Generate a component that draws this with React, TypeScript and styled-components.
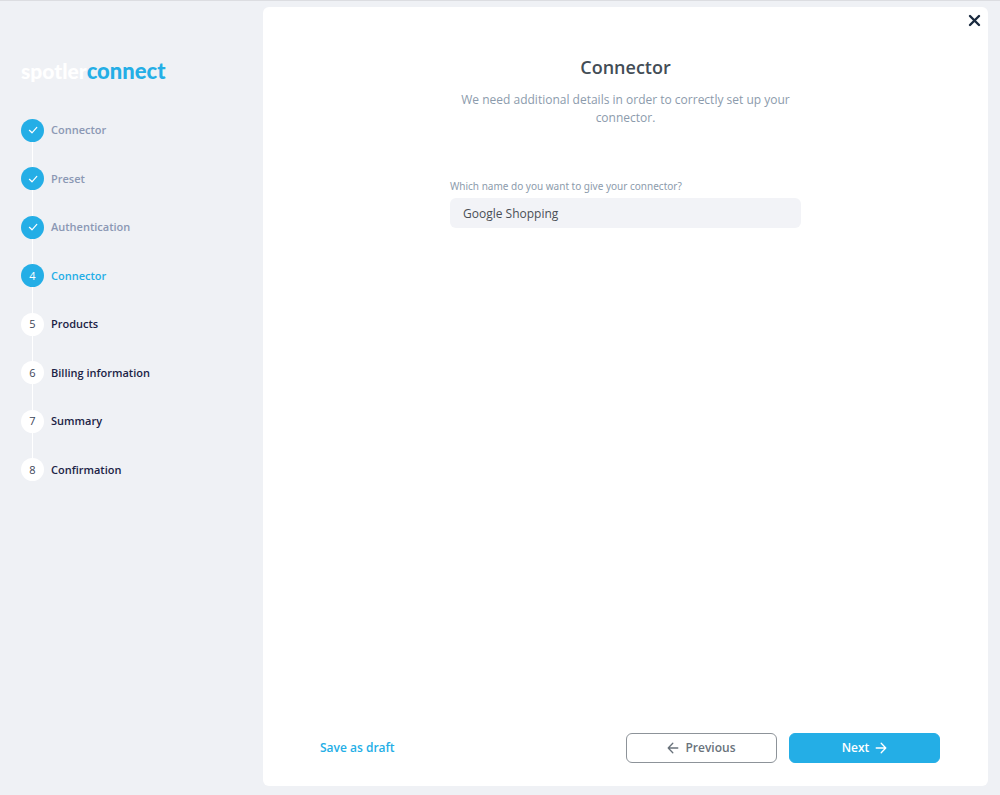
import React, { useState } from "react";
import styled, { createGlobalStyle, css } from "styled-components";

const GlobalStyle = createGlobalStyle`
  *, *::before, *::after { box-sizing: border-box; }
  body {
    margin: 0;
    background: #eff1f5;
    font-family: "Open Sans", "Noto Sans", sans-serif;
    font-size: 12px;
    line-height: 18px;
    color: #434d56;
  }
  button, input { font: inherit; }
`;

const Page = styled.div`
  display: grid;
  grid-template-columns: 263px minmax(0, 1fr);
  min-height: 100vh;
  border-top: 1px solid #dcdde1;
`;

const Sidebar = styled.aside`
  padding: 57px 20px 24px 21px;
`;

const Logo = styled.div`
  height: 26px;
  font-family: Lato, sans-serif;
  font-size: 21px;
  font-weight: 900;
  line-height: 26px;
  color: #fff;
`;

const LogoAccent = styled.span`
  font-size: 22px;
  color: #24aee6;
`;

const StepList = styled.ol`
  display: grid;
  grid-auto-rows: 1fr;
  min-height: 388px;
  margin: 22px 0 0;
  padding: 0;
  list-style: none;
`;

type StepState = "done" | "current" | "todo";

const labelColor = { done: "#8b98b4", current: "#24aee6", todo: "#1b2345" };

const StepItem = styled.li<{ $state: StepState }>`
  position: relative;
  display: flex;
  align-items: center;
  gap: 7px;
  font-size: 11px;
  font-weight: 600;
  color: ${(p) => labelColor[p.$state]};

  &:not(:last-child)::before {
    content: "";
    position: absolute;
    top: 50%;
    left: 11px;
    width: 1px;
    height: 100%;
    background: #fff;
  }
`;

const Marker = styled.span<{ $state: StepState }>`
  position: relative;
  z-index: 1;
  display: flex;
  align-items: center;
  justify-content: center;
  width: 23px;
  height: 23px;
  border-radius: 50%;
  font-weight: 400;
  background: ${(p) => (p.$state === "todo" ? "#fff" : "#24aee6")};
  color: ${(p) => (p.$state === "todo" ? "#3c4558" : "#fff")};
`;

const Panel = styled.main`
  position: relative;
  display: flex;
  flex-direction: column;
  margin: 6px 12px 9px 0;
  padding: 48px 48px 23px;
  border-radius: 6px;
  background: #fff;
`;

const CloseButton = styled.button`
  position: absolute;
  top: 6px;
  right: 6px;
  display: flex;
  padding: 0;
  border: 0;
  background: none;
  color: #1a2a3f;
  cursor: pointer;
`;

const Content = styled.form`
  flex: 1;
  width: 100%;
  max-width: 351px;
  margin: 0 auto;
  display: flex;
  flex-direction: column;
`;

const Title = styled.h1`
  margin: 0;
  font-size: 18px;
  font-weight: 600;
  line-height: 24px;
  text-align: center;
`;

const Intro = styled.p`
  margin: 12px 0 50px;
  text-align: center;
  color: #8c9bac;
`;

const FieldLabel = styled.label`
  margin-bottom: 3px;
  font-family: "Noto Sans", sans-serif;
  font-size: 10px;
  color: #8c9bac;
`;

const TextInput = styled.input`
  width: 100%;
  height: 30px;
  padding: 0 13px;
  border: 0;
  border-radius: 6px;
  background: #f2f3f7;
  color: #4a4f56;
`;

const Footer = styled.footer`
  display: flex;
  align-items: center;
  gap: 12px;
  padding-left: 9px;
`;

const DraftLink = styled.a`
  margin-right: auto;
  font-weight: 600;
  color: #24aee6;
  text-decoration: none;
`;

const NavButton = styled.button<{ $primary?: boolean }>`
  display: flex;
  align-items: center;
  justify-content: center;
  gap: 6px;
  width: 151px;
  height: 30px;
  padding: 0;
  border: 1px solid #8d9399;
  border-radius: 6px;
  background: #fff;
  color: #69727b;
  font-weight: 600;
  cursor: pointer;
  ${(p) =>
    p.$primary &&
    css`
      border-color: #24aee6;
      background: #24aee6;
      color: #fff;
    `}
`;

const CheckIcon = () => (
  <svg width="10" height="10" viewBox="0 0 10 10" fill="none" stroke="currentColor" strokeWidth="1.2" strokeLinecap="round" strokeLinejoin="round" aria-hidden="true">
    <path d="M1.4 5.3 4 7.8 8.8 2.4" />
  </svg>
);

const CloseIcon = () => (
  <svg width="15" height="15" viewBox="0 0 15 15" fill="none" stroke="currentColor" strokeWidth="2.4" strokeLinecap="round" aria-hidden="true">
    <path d="M3 3 12 12M12 3 3 12" />
  </svg>
);

const ArrowIcon = ({ back = false }: { back?: boolean }) => (
  <svg width="12" height="12" viewBox="0 0 12 12" fill="none" stroke="currentColor" strokeWidth="1.3" strokeLinecap="round" strokeLinejoin="round" aria-hidden="true">
    <path d={back ? "M10.8 6H1.2M5.8 1.2 1.2 6l4.6 4.8" : "M1.2 6h9.6M6.2 1.2 10.8 6l-4.6 4.8"} />
  </svg>
);

const steps = [
  "Connector",
  "Preset",
  "Authentication",
  "Connector",
  "Products",
  "Billing information",
  "Summary",
  "Confirmation",
];
const currentStep = 3;

const stateOf = (index: number): StepState =>
  index < currentStep ? "done" : index === currentStep ? "current" : "todo";

export default function App() {
  const [name, setName] = useState("Google Shopping");

  return (
    <>
      <GlobalStyle />
      <Page>
        <Sidebar>
          <Logo>
            spotler<LogoAccent>connect</LogoAccent>
          </Logo>
          <StepList>
            {steps.map((label, i) => {
              const state = stateOf(i);
              return (
                <StepItem key={i} $state={state} aria-current={state === "current" ? "step" : undefined}>
                  <Marker $state={state}>{state === "done" ? <CheckIcon /> : i + 1}</Marker>
                  {label}
                </StepItem>
              );
            })}
          </StepList>
        </Sidebar>
        <Panel>
          <CloseButton type="button" aria-label="Close">
            <CloseIcon />
          </CloseButton>
          <Content id="connector-form" onSubmit={(e) => e.preventDefault()}>
            <Title>Connector</Title>
            <Intro>We need additional details in order to correctly set up your connector.</Intro>
            <FieldLabel htmlFor="connector-name">Which name do you want to give your connector?</FieldLabel>
            <TextInput id="connector-name" type="text" value={name} onChange={(e) => setName(e.target.value)} />
          </Content>
          <Footer>
            <DraftLink href="#draft">Save as draft</DraftLink>
            <NavButton type="button">
              <ArrowIcon back />
              Previous
            </NavButton>
            <NavButton type="submit" form="connector-form" $primary>
              Next
              <ArrowIcon />
            </NavButton>
          </Footer>
        </Panel>
      </Page>
    </>
  );
}
